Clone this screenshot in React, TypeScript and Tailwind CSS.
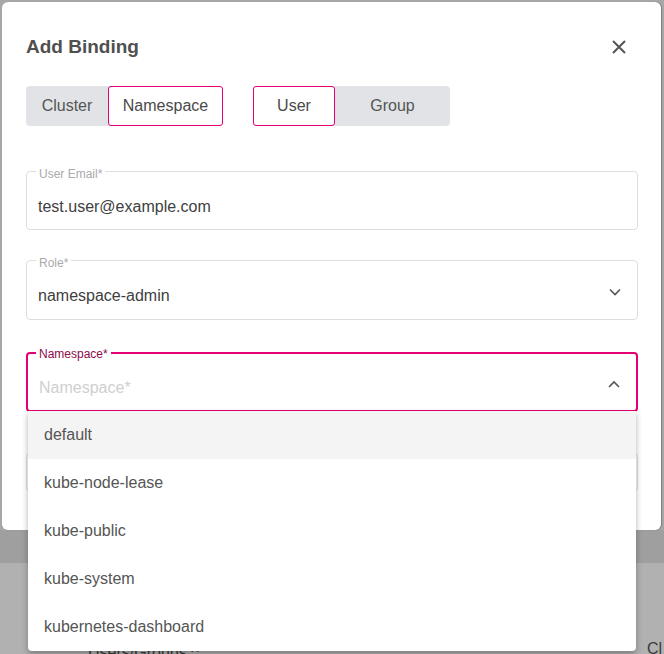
import { useState } from "react";

const namespaces = ["default", "kube-node-lease", "kube-public", "kube-system", "kubernetes-dashboard"];

function Chevron({ up }: { up?: boolean }) {
  return (
    <svg width="12" height="8" viewBox="0 0 12 8" fill="none" className="text-[#555]">
      <path d={up ? "M1 7L6 2L11 7" : "M1 1.5L6 6.5L11 1.5"} stroke="currentColor" strokeWidth="1.6" />
    </svg>
  );
}

function Segmented({ options, value }: { options: [string, number][]; value: string }) {
  return (
    <div className="flex h-10 rounded bg-[#e1e3e6]">
      {options.map(([label, width]) => (
        <div
          key={label}
          style={{ width }}
          className={`flex items-center justify-center rounded-[3px] text-base ${
            label === value ? "border border-[#e20074] bg-white text-[#4a4a4a]" : "text-[#555]"
          }`}
        >
          {label}
        </div>
      ))}
    </div>
  );
}

function Outlined({
  label,
  children,
  focused,
  right,
  className = "",
}: {
  label: string;
  children: React.ReactNode;
  focused?: boolean;
  right?: React.ReactNode;
  className?: string;
}) {
  return (
    <div
      className={`relative flex items-center rounded pl-[11px] pr-[16px] ${
        focused ? "border-2 border-[#e20074]" : "border border-[#dedede]"
      } ${className}`}
    >
      <span
        className={`absolute bg-white px-[3px] text-xs leading-[14px] ${
          focused ? "-top-[7px] left-[8px] text-[#8c0b4a]" : "-top-[5px] left-[9px] text-[#aaaaaa]"
        }`}
      >
        {label}
      </span>
      <div className="flex-1 pt-[12px] text-base">{children}</div>
      {right && <div className="pt-[4px]">{right}</div>}
    </div>
  );
}

export default function App() {
  const [selected] = useState("default");

  return (
    <div className="relative h-[654px] w-[664px] overflow-hidden font-['Liberation_Sans',Arial,sans-serif]">
      {/* dimmed page behind the dialog */}
      <div className="flex h-full flex-col">
        <div className="h-[530px] bg-[#a7a7a7]" />
        <div className="h-[33px] bg-[#9f9f9f]" />
        <div className="relative flex-1 bg-[#b1b1b1]">
          <span className="absolute left-[88px] top-[78px] text-base text-[#3a3a3a]">Users/Groups ^</span>
          <span className="absolute left-[647px] top-[74px] text-base text-[#3a3a3a]">Cl</span>
        </div>
      </div>

      <div className="absolute left-[2px] top-[2px] w-[659px] rounded-md bg-white pb-[38px] pl-[24px] pr-[23px] pt-[31px] shadow-[1px_0_1px_rgba(0,0,0,0.25)]">
        <div className="flex h-7 items-center justify-between pr-[12px]">
          <h2 className="text-[19px] font-bold text-[#505050]">Add Binding</h2>
          <svg width="14" height="14" viewBox="0 0 14 14" className="text-[#555]">
            <path d="M1 1L13 13M13 1L1 13" stroke="currentColor" strokeWidth="2" />
          </svg>
        </div>

        <div className="mt-[25px] flex gap-[30px]">
          <Segmented options={[["Cluster", 82], ["Namespace", 115]]} value="Namespace" />
          <Segmented options={[["User", 82], ["Group", 115]]} value="User" />
        </div>

        <div className="mt-[45px] flex flex-col">
          <Outlined label="User Email*" className="h-[59px]">
            <span className="text-[#404040]">test.user@example.com</span>
          </Outlined>
          <Outlined label="Role*" right={<Chevron />} className="mt-[30px] h-[60px]">
            <span className="text-[#404040]">namespace-admin</span>
          </Outlined>
          <div className="relative mt-[32px]">
            <Outlined label="Namespace*" focused right={<Chevron up />} className="h-[60px]">
              <span className="text-[#cfcfcf]">Namespace*</span>
            </Outlined>
            <div className="absolute left-[2px] right-[2px] top-[59px] z-10 overflow-hidden rounded-b bg-white shadow-[0_3px_6px_rgba(0,0,0,0.3)]">
              {namespaces.map((ns) => (
                <div
                  key={ns}
                  className={`flex h-12 items-center pl-[16px] text-base text-[#555] ${
                    ns === selected ? "bg-[#f4f4f4]" : ""
                  }`}
                >
                  {ns}
                </div>
              ))}
            </div>
          </div>
          <div className="mt-[41px] h-[39px] rounded border border-[#dedede]" />
        </div>
      </div>
    </div>
  );
}
